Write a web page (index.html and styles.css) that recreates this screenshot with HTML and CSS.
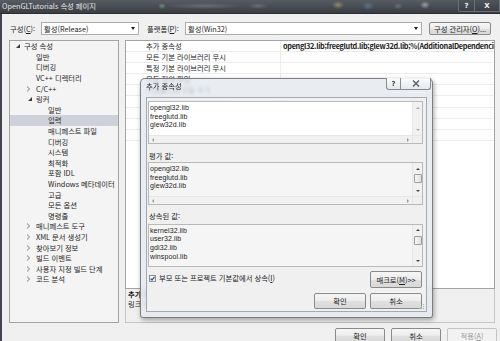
FILE: index.html
```html
<!DOCTYPE html>
<html lang="ko">
<head>
  <meta charset="UTF-8">
  <title>OpenGLTutorials 속성 페이지</title>
  <link rel="stylesheet" href="styles.css">
</head>
<body>
  <div class="window">
    <div class="titlebar">
      <span class="title">OpenGLTutorials 속성 페이지</span>
      <div class="caption-buttons">
        <span class="cap-btn help">?</span>
        <span class="cap-btn close">X</span>
      </div>
    </div>

    <div class="client">
      <div class="config-row">
        <label class="lbl-config">구성(<u>C</u>):</label>
        <div class="combo combo-config">활성(Release)<span class="drop"></span></div>
        <label class="lbl-platform">플랫폼(<u>P</u>):</label>
        <div class="combo combo-platform">활성(Win32)<span class="drop"></span></div>
        <button class="btn btn-manager">구성 관리자(<u>O</u>)...</button>
      </div>

      <div class="main">
        <ul class="tree">
          <li class="lv0"><span class="exp open"></span>구성 속성</li>
          <li class="lv1"><span class="exp"></span>일반</li>
          <li class="lv1"><span class="exp"></span>디버깅</li>
          <li class="lv1"><span class="exp"></span>VC++ 디렉터리</li>
          <li class="lv1"><span class="exp shut"></span>C/C++</li>
          <li class="lv1"><span class="exp open"></span>링커</li>
          <li class="lv2"><span class="exp"></span>일반</li>
          <li class="lv2 selected"><span class="exp"></span>입력</li>
          <li class="lv2"><span class="exp"></span>매니페스트 파일</li>
          <li class="lv2"><span class="exp"></span>디버깅</li>
          <li class="lv2"><span class="exp"></span>시스템</li>
          <li class="lv2"><span class="exp"></span>최적화</li>
          <li class="lv2"><span class="exp"></span>포함 IDL</li>
          <li class="lv2"><span class="exp"></span>Windows 메타데이터</li>
          <li class="lv2"><span class="exp"></span>고급</li>
          <li class="lv2"><span class="exp"></span>모든 옵션</li>
          <li class="lv2"><span class="exp"></span>명령줄</li>
          <li class="lv1"><span class="exp shut"></span>매니페스트 도구</li>
          <li class="lv1"><span class="exp shut"></span>XML 문서 생성기</li>
          <li class="lv1"><span class="exp shut"></span>찾아보기 정보</li>
          <li class="lv1"><span class="exp shut"></span>빌드 이벤트</li>
          <li class="lv1"><span class="exp shut"></span>사용자 지정 빌드 단계</li>
          <li class="lv1"><span class="exp shut"></span>코드 분석</li>
        </ul>

        <div class="props">
          <div class="grid">
            <div class="prop-row">
              <span class="name">추가 종속성</span>
              <span class="value">opengl32.lib;freeglutd.lib;glew32d.lib;%(AdditionalDependencies)</span>
            </div>
            <div class="prop-row"><span class="name">모든 기본 라이브러리 무시</span><span class="value"></span></div>
            <div class="prop-row"><span class="name">특정 기본 라이브러리 무시</span><span class="value"></span></div>
            <div class="prop-row"><span class="name">모듈 정의 파일</span><span class="value"></span></div>
            <div class="prop-row"><span class="name">어셈블리에 모듈 추가</span><span class="value"></span></div>
            <div class="prop-row"><span class="name">관리되는 리소스 파일 포함</span><span class="value"></span></div>
            <div class="prop-row"><span class="name">심볼 참조 강제 적용</span><span class="value"></span></div>
            <div class="prop-row"><span class="name">지연 로드된 DLL</span><span class="value"></span></div>
            <div class="prop-row"><span class="name">어셈블리 링크 리소스</span><span class="value"></span></div>
          </div>
          <div class="desc">
            <div class="desc-title">추가 종속성</div>
            <div>링크 명령줄에 추가할 추가 항목을 지정합니다. [예: kernel32.lib]</div>
          </div>
        </div>
      </div>

      <div class="footer">
        <button class="btn">확인</button>
        <button class="btn">취소</button>
        <button class="btn" disabled>적용(<u>A</u>)</button>
      </div>
    </div>
  </div>

  <div class="dialog">
    <div class="dlg-title">추가 종속성</div>
    <div class="dlg-caption">
      <span class="dlg-cap help">?</span>
      <span class="dlg-cap close">
        <svg width="8" height="7" viewBox="0 0 8 7"><path d="M1 0.5 L7 6.5 M7 0.5 L1 6.5" stroke="#5a5a5a" stroke-width="1.3" fill="none"/></svg>
      </span>
    </div>

    <div class="dlg-client">
      <div class="edit edit-input">
        <div class="edit-main">
          <div class="edit-text">
            <div>opengl32.lib</div>
            <div>freeglutd.lib</div>
            <div>glew32d.lib</div>
          </div>
          <div class="vscroll off">
            <span class="sbtn"><span class="arr up"></span></span>
            <span class="track"></span>
            <span class="sbtn"><span class="arr down"></span></span>
          </div>
        </div>
        <div class="hscroll">
          <span class="sbtn"><span class="arr left"></span></span>
          <span class="track"></span>
          <span class="sbtn"><span class="arr right"></span></span>
          <span class="corner"></span>
        </div>
      </div>

      <div class="dlg-label">평가 값:</div>
      <div class="edit readonly">
        <div class="edit-main">
          <div class="edit-text">
            <div>opengl32.lib</div>
            <div>freeglutd.lib</div>
            <div>glew32d.lib</div>
          </div>
          <div class="vscroll">
            <span class="sbtn"><span class="arr up"></span></span>
            <span class="thumb"></span>
            <span class="track"></span>
            <span class="sbtn"><span class="arr down"></span></span>
          </div>
        </div>
        <div class="hscroll">
          <span class="sbtn"><span class="arr left"></span></span>
          <span class="track"></span>
          <span class="sbtn"><span class="arr right"></span></span>
          <span class="corner"></span>
        </div>
      </div>

      <div class="dlg-label inherited">상속된 값:</div>
      <div class="edit readonly edit-inherited">
        <div class="edit-main">
          <div class="edit-text">
            <div>kernel32.lib</div>
            <div>user32.lib</div>
            <div>gdi32.lib</div>
            <div>winspool.lib</div>
          </div>
          <div class="vscroll">
            <span class="sbtn"><span class="arr up"></span></span>
            <span class="thumb"></span>
            <span class="track"></span>
            <span class="sbtn"><span class="arr down"></span></span>
          </div>
        </div>
      </div>

      <div class="dlg-options">
        <label class="check">
          <svg width="7" height="7" viewBox="0 0 7 7">
            <rect x="0.5" y="0.5" width="6" height="6" fill="#eef2f7" stroke="#8e8f8f"/>
            <path d="M1.6 3.6 L3 5 L5.5 1.8" stroke="#2c4f8f" stroke-width="1.2" fill="none"/>
          </svg>
          <span>부모 또는 프로젝트 기본값에서 상속(<u>I</u>)</span>
        </label>
        <button class="btn dlg-btn">매크로(<u>M</u>)&gt;&gt;</button>
      </div>

      <div class="dlg-buttons">
        <button class="btn dlg-btn">확인</button>
        <button class="btn dlg-btn">취소</button>
      </div>

      <svg class="gripper" width="6" height="6" viewBox="0 0 6 6">
        <rect x="4" y="0" width="1.2" height="1.2" fill="#b8b8b8"/>
        <rect x="2" y="2" width="1.2" height="1.2" fill="#b8b8b8"/>
        <rect x="4" y="2" width="1.2" height="1.2" fill="#b8b8b8"/>
        <rect x="0" y="4" width="1.2" height="1.2" fill="#b8b8b8"/>
        <rect x="2" y="4" width="1.2" height="1.2" fill="#b8b8b8"/>
        <rect x="4" y="4" width="1.2" height="1.2" fill="#b8b8b8"/>
      </svg>
    </div>
  </div>
</body>
</html>
```

FILE: styles.css
```css
* {
  box-sizing: border-box;
}
body {
  margin: 0;
  width: 500px;
  height: 341px;
  overflow: hidden;
  position: relative;
  background: #f0f0f0;
  font-family: "Noto Sans CJK KR", "Noto Sans", sans-serif;
  font-size: 7.3px;
  color: #1b1b1b;
}
u {
  text-decoration-thickness: 0.5px;
  text-underline-offset: 1px;
}
.window {
  height: 341px;
  display: flex;
  flex-direction: column;
}

/* title bar */
.titlebar {
  height: 14px;
  flex: none;
  display: flex;
  align-items: flex-start;
  justify-content: space-between;
  padding-left: 2px;
  color: #e6e6e6;
  border-bottom: 1px solid #2a2d31;
  background:
    radial-gradient(ellipse 4px 3px at 162px 6px, rgba(120, 200, 140, 0.55), transparent),
    radial-gradient(ellipse 38px 3px at 205px 6px, rgba(200, 200, 200, 0.25), transparent),
    radial-gradient(ellipse 10px 3px at 258px 6px, rgba(200, 200, 200, 0.25), transparent),
    radial-gradient(ellipse 6px 4px at 338px 5px, rgba(230, 200, 120, 0.45), transparent),
    radial-gradient(ellipse 6px 4px at 368px 6px, rgba(120, 160, 220, 0.4), transparent),
    radial-gradient(ellipse 5px 3px at 398px 6px, rgba(140, 190, 170, 0.35), transparent),
    radial-gradient(ellipse 5px 4px at 425px 5px, rgba(230, 230, 240, 0.5), transparent),
    linear-gradient(#575c63, #3a3e43);
}
.title {
  line-height: 13px;
}
.caption-buttons {
  display: flex;
}
.cap-btn {
  height: 12px;
  display: flex;
  align-items: center;
  justify-content: center;
  border: 1px solid #6c7178;
  border-top: none;
  background: linear-gradient(#50555c, #3c4046);
  color: #f2f2f2;
  font: bold 7px "DejaVu Sans", sans-serif;
}
.cap-btn.help {
  width: 17px;
  border-radius: 0 0 0 2px;
}
.cap-btn.close {
  width: 25px;
  border-left: none;
}

/* window body */
.client {
  flex: 1;
  display: flex;
  flex-direction: column;
  border-left: 2px solid #43474d;
  padding: 8px 3px 0 7px;
}
.config-row {
  height: 13px;
  display: flex;
  align-items: center;
  margin-bottom: 5px;
}
.lbl-config {
  width: 32px;
  padding-left: 1px;
}
.lbl-platform {
  width: 46px;
  padding-left: 8px;
}
.combo {
  height: 13px;
  display: flex;
  align-items: center;
  justify-content: space-between;
  padding-left: 2px;
  background: #fff;
  border: 1px solid #acacac;
}
.combo-config {
  width: 98px;
}
.combo-platform {
  width: 237px;
}
.drop {
  width: 0;
  height: 0;
  margin-right: 3px;
  border-left: 2px solid transparent;
  border-right: 2px solid transparent;
  border-top: 3px solid #1b1b1b;
}
.btn {
  font: inherit;
  color: #1b1b1b;
  height: 15px;
  width: 50px;
  padding: 0;
  border: 1px solid #8a8a8a;
  border-radius: 2px;
  background: linear-gradient(#f6f6f6, #ececec 50%, #e0e0e0 51%, #d9d9d9);
}
.btn:disabled {
  color: #9a9a9a;
  border-color: #c2c4c6;
  background: #f2f2f2;
}
.btn-manager {
  width: 62px;
  height: 13px;
  margin-left: 7px;
}

.main {
  height: 283px;
  flex: none;
  display: flex;
  gap: 6px;
}
.tree {
  list-style: none;
  margin: 0;
  padding: 0;
  width: 110px;
  background: #f4f4f4;
  border: 1px solid #a3a3a3;
}
.tree li {
  height: 10.6px;
  display: flex;
  align-items: center;
  white-space: nowrap;
  color: #1e1e1e;
}
.tree .lv0 {
  padding-left: 6px;
}
.tree .lv1 {
  padding-left: 18px;
}
.tree .lv2 {
  padding-left: 30px;
}
.tree li.selected {
  background: #cfd1da;
}
.exp {
  width: 8px;
  height: 6px;
  flex: none;
  position: relative;
}
.exp.open::before {
  content: "";
  position: absolute;
  left: 0;
  top: 1px;
  border-left: 4px solid transparent;
  border-bottom: 4px solid #3c3c3c;
}
.exp.shut::before {
  content: "";
  position: absolute;
  left: -1px;
  top: 0;
  border-top: 3px solid transparent;
  border-bottom: 3px solid transparent;
  border-left: 3px solid #7a7a7a;
}
.exp.shut::after {
  content: "";
  position: absolute;
  left: -1px;
  top: 1px;
  border-top: 2px solid transparent;
  border-bottom: 2px solid transparent;
  border-left: 2px solid #f4f4f4;
}

.props {
  width: 370px;
  display: flex;
  flex-direction: column;
}
.grid {
  flex: 1;
  background: #fff;
  border: 1px solid #a3a3a3;
}
.prop-row {
  height: 11.1px;
  display: flex;
  align-items: center;
  border-bottom: 1px solid #ececec;
  white-space: nowrap;
}
.prop-row .name {
  width: 155px;
  height: 100%;
  display: flex;
  align-items: center;
  padding-left: 20px;
  border-right: 1px solid #ececec;
}
.prop-row .value {
  flex: 1;
  overflow: hidden;
  padding-left: 2px;
  font-weight: bold;
  letter-spacing: -0.3px;
}
.desc {
  height: 34px;
  padding: 0 2px;
  line-height: 10px;
  border: 1px solid #c6c6c6;
  border-top: none;
  white-space: nowrap;
  overflow: hidden;
}
.desc-title {
  font-weight: bold;
}

.footer {
  display: flex;
  justify-content: flex-end;
  gap: 6px;
  margin-top: 5px;
}

/* additional dependencies dialog */
.dialog {
  position: absolute;
  left: 140px;
  top: 78px;
  width: 293px;
  height: 240px;
  padding: 18px 5px 5px;
  border: 1px solid rgba(50, 55, 60, 0.6);
  border-radius: 5px 5px 3px 3px;
  background: rgba(228, 233, 239, 0.82);
  backdrop-filter: blur(1.5px);
  box-shadow: 1px 2px 5px rgba(0, 0, 0, 0.35);
}
.dlg-title {
  position: absolute;
  left: 5px;
  top: 2px;
  line-height: 10px;
  color: #1b1b1b;
}
.dlg-caption {
  position: absolute;
  right: 1px;
  top: -1px;
  display: flex;
}
.dlg-cap {
  height: 12px;
  display: flex;
  align-items: center;
  justify-content: center;
  border: 1px solid #878c92;
  border-top: none;
  background: linear-gradient(rgba(255, 255, 255, 0.9), rgba(226, 231, 236, 0.9));
}
.dlg-cap.help {
  width: 15px;
  border-radius: 0 0 0 3px;
  color: #4a4a4a;
  font: bold 7px "DejaVu Sans", sans-serif;
}
.dlg-cap.close {
  width: 30px;
  border-left: none;
  border-radius: 0 0 3px 0;
}
.dlg-client {
  position: relative;
  height: 100%;
  display: flex;
  flex-direction: column;
  background: #f0f0f0;
  border: 1px solid #a2a9b1;
}

.edit {
  height: 43px;
  flex: none;
  margin: 0 3px 0 1px;
  display: flex;
  flex-direction: column;
  background: #fff;
  border: 1px solid #b9b9b9;
}
.edit-input {
  margin-top: 3px;
}
.edit.readonly {
  background: #f5f5f5;
}
.edit-inherited {
  height: 43.5px;
}
.edit-main {
  flex: 1;
  display: flex;
  min-height: 0;
}
.edit-text {
  flex: 1;
  padding: 2px 0 0 1px;
  font-family: "Liberation Sans", Arial, sans-serif;
  font-size: 7px;
  letter-spacing: 0.1px;
  line-height: 8.7px;
  white-space: nowrap;
}
.vscroll {
  width: 10px;
  display: flex;
  flex-direction: column;
  align-items: center;
  background: #f1f1f1;
  border-left: 1px solid #e6e6e6;
}
.vscroll .sbtn {
  height: 11px;
  flex: none;
}
.vscroll .track,
.hscroll .track {
  flex: 1;
}
.sbtn {
  display: flex;
  align-items: center;
  justify-content: center;
  width: 9px;
}
.thumb {
  width: 8px;
  height: 9px;
  flex: none;
  border: 1px solid #9c9c9c;
  border-radius: 1px;
  background: linear-gradient(to right, #f6f6f6, #e0e0e0);
}
.hscroll {
  height: 8px;
  flex: none;
  display: flex;
  align-items: center;
  background: #f1f1f1;
  border-top: 1px solid #e6e6e6;
}
.hscroll .sbtn {
  height: 100%;
  width: 9px;
}
.hscroll .sbtn:first-child {
  width: 8px;
}
.hscroll .corner {
  width: 10px;
  height: 100%;
  background: #f0f0f0;
  border-left: 1px solid #e6e6e6;
}
.arr {
  width: 0;
  height: 0;
}
.arr.up {
  border-left: 2px solid transparent;
  border-right: 2px solid transparent;
  border-bottom: 2px solid #444;
}
.arr.down {
  border-left: 2px solid transparent;
  border-right: 2px solid transparent;
  border-top: 2px solid #444;
}
.arr.left {
  border-top: 2px solid transparent;
  border-bottom: 2px solid transparent;
  border-right: 2px solid #9a9a9a;
}
.arr.right {
  border-top: 2px solid transparent;
  border-bottom: 2px solid transparent;
  border-left: 2px solid #9a9a9a;
}
.vscroll.off .arr.up {
  border-bottom-color: #a8a8a8;
}
.vscroll.off .arr.down {
  border-top-color: #a8a8a8;
}

.dlg-label {
  margin: 7px 0 1px 2px;
  line-height: 10px;
}
.dlg-label.inherited {
  margin: 6px 0 2.5px 2px;
}
.dlg-options {
  height: 17px;
  margin: 4px 4px 0 2px;
  display: flex;
  justify-content: space-between;
}
.check {
  align-self: flex-start;
  margin-top: 2px;
  display: flex;
  align-items: center;
  gap: 3px;
  line-height: 10px;
}
.dlg-btn {
  width: 52px;
  height: 17px;
}
.dlg-buttons {
  display: flex;
  justify-content: flex-end;
  gap: 4px;
  margin: 5px 4px 0 0;
}
.dlg-buttons .dlg-btn {
  height: 16px;
}
.gripper {
  position: absolute;
  right: 1px;
  bottom: 1px;
}
```
